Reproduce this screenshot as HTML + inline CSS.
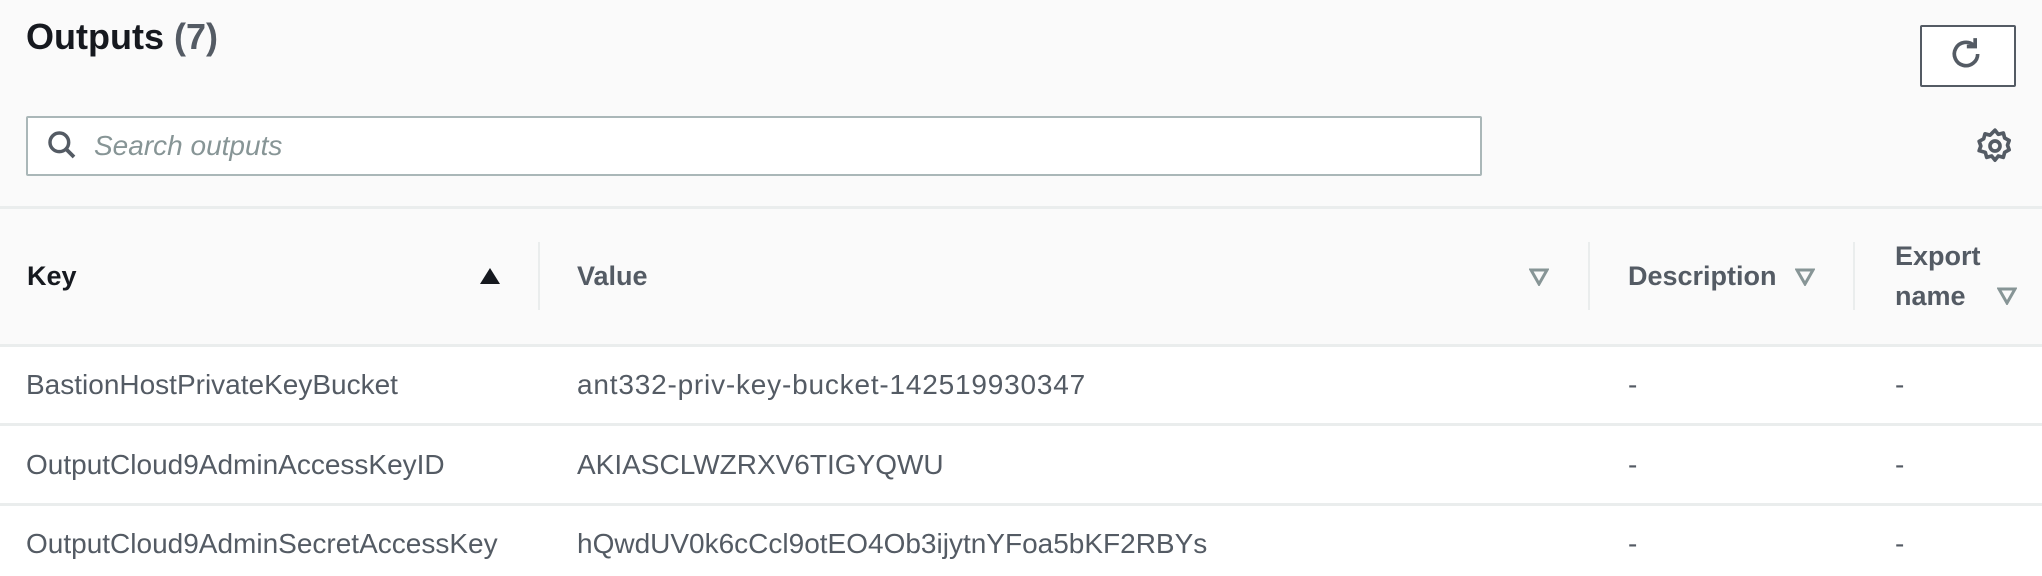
<!DOCTYPE html>
<html><head><meta charset="utf-8"><style>
body{margin:0;width:2042px;height:576px;overflow:hidden;background:#fff;font-family:"Liberation Sans",sans-serif;position:relative}
.top{position:absolute;left:0;top:0;width:2042px;height:345px;background:#fafafa}
.a{position:absolute;white-space:nowrap}
.hl{position:absolute;left:0;width:2042px;height:3px;background:#eaeded}
.body{font-size:28px;color:#545b64;line-height:30px}
.h{font-size:27px;font-weight:bold;color:#545b64;line-height:30px}
.vd{position:absolute;top:242px;height:68px;width:2px;background:#eaeded}
</style></head><body>
<div class="top"></div>
<div class="a" style="left:26px;top:16px;font-size:36px;font-weight:bold;color:#16191f">Outputs <span style="color:#545b64">(7)</span></div>
<div class="a" style="left:1920px;top:25px;width:92px;height:58px;border:2px solid #545b64;border-radius:2px;background:#fff"></div>
<svg class="a" style="left:1946px;top:34px" width="40" height="40" viewBox="0 0 24 24"><path d="M19 12a7 7 0 1 1-2.2-5.1" fill="none" stroke="#545b64" stroke-width="2.2"/><path d="M17.5 2.5v5h-5" fill="none" stroke="#545b64" stroke-width="2.2"/></svg>
<div class="a" style="left:26px;top:116px;width:1452px;height:56px;border:2px solid #aab7b8;background:#fff;border-radius:2px"></div>
<svg class="a" style="left:46px;top:129px" width="32" height="32" viewBox="0 0 24 24"><circle cx="10" cy="10" r="7" fill="none" stroke="#545b64" stroke-width="2.6"/><path d="M15 15l6 6" stroke="#545b64" stroke-width="2.8"/></svg>
<div class="a" style="left:94px;top:130px;font-size:28px;font-style:italic;color:#879596">Search outputs</div>
<svg class="a" style="left:1975px;top:126px" width="40" height="40" viewBox="0 0 24 24"><circle cx="12" cy="12" r="3" fill="none" stroke="#545b64" stroke-width="2.2"/><path d="M12 2.5l2 2.5 3-.8.8 3 2.7 1.5-1 2.8 1 2.8-2.7 1.5-.8 3-3-.8-2 2.5-2-2.5-3 .8-.8-3L2.5 14.8l1-2.8-1-2.8 2.7-1.5.8-3 3 .8z" fill="none" stroke="#545b64" stroke-width="2.2" stroke-linejoin="round"/></svg>
<div class="hl" style="top:206px"></div>
<div class="vd" style="left:538px"></div><div class="vd" style="left:1588px"></div><div class="vd" style="left:1853px"></div>
<div class="a h" style="left:27px;top:261px;color:#16191f">Key</div>
<svg class="a" style="left:479px;top:267px" width="22" height="18"><path d="M11 1L21 17H1z" fill="#16191f"/></svg>
<div class="a h" style="left:577px;top:261px">Value</div>
<svg class="a" style="left:1529px;top:268px" width="20" height="18"><path d="M2 2h16L10 16z" fill="none" stroke="#879596" stroke-width="3"/></svg>
<div class="a h" style="left:1628px;top:261px">Description</div>
<svg class="a" style="left:1795px;top:268px" width="20" height="18"><path d="M2 2h16L10 16z" fill="none" stroke="#879596" stroke-width="3"/></svg>
<div class="a h" style="left:1895px;top:241px">Export</div>
<div class="a h" style="left:1895px;top:281px">name</div>
<svg class="a" style="left:1997px;top:287px" width="20" height="18"><path d="M2 2h16L10 16z" fill="none" stroke="#879596" stroke-width="3"/></svg>
<div class="hl" style="top:344px"></div>
<div class="hl" style="top:423px"></div>
<div class="hl" style="top:503px"></div>
<div class="a body" style="left:26px;top:370px">BastionHostPrivateKeyBucket</div>
<div class="a body" style="left:577px;top:370px;letter-spacing:0.8px">ant332-priv-key-bucket-142519930347</div>
<div class="a body" style="left:1628px;top:370px">-</div><div class="a body" style="left:1895px;top:370px">-</div>
<div class="a body" style="left:26px;top:450px">OutputCloud9AdminAccessKeyID</div>
<div class="a body" style="left:577px;top:450px">AKIASCLWZRXV6TIGYQWU</div>
<div class="a body" style="left:1628px;top:450px">-</div><div class="a body" style="left:1895px;top:450px">-</div>
<div class="a body" style="left:26px;top:529px">OutputCloud9AdminSecretAccessKey</div>
<div class="a body" style="left:577px;top:529px">hQwdUV0k6cCcl9otEO4Ob3ijytnYFoa5bKF2RBYs</div>
<div class="a body" style="left:1628px;top:529px">-</div><div class="a body" style="left:1895px;top:529px">-</div>
</body></html>
